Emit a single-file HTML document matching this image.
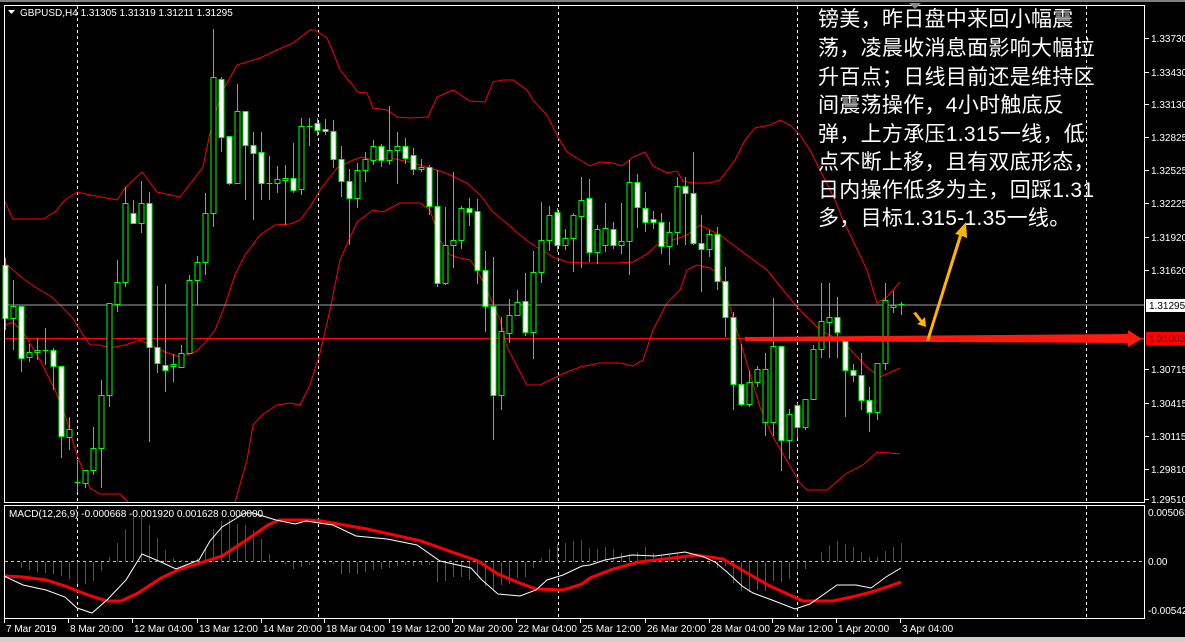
<!DOCTYPE html>
<html><head><meta charset="utf-8">
<style>
html,body{margin:0;padding:0;background:#000;width:1185px;height:642px;overflow:hidden}
svg{display:block}
text{font-family:"Liberation Sans","Noto Sans CJK SC",sans-serif}
</style></head><body>
<svg id="s" width="1185" height="642" viewBox="0 0 1185 642" xmlns="http://www.w3.org/2000/svg">
<rect width="1185" height="642" fill="#000"/>
<rect x="0" y="0" width="1185" height="2" fill="#808080"/>
<rect x="0" y="637" width="1185" height="5" fill="#d4d0c8"/>
<g id="grid" shape-rendering="crispEdges"></g>
<g id="bands" fill="none" stroke="#ff0000" stroke-width="1"></g>
<line x1="4" y1="305" x2="1145" y2="305" stroke="#a0a0a8" stroke-width="1" shape-rendering="crispEdges"/>
<line x1="4" y1="338.5" x2="1145" y2="338.5" stroke="#ff0000" stroke-width="1" shape-rendering="crispEdges"/>
<g id="candles" shape-rendering="crispEdges"></g>
<g id="hist" shape-rendering="crispEdges"></g>
<g id="macd"></g>
<g shape-rendering="crispEdges">
<rect x="4.5" y="5.5" width="1140" height="497" fill="none" stroke="#fff" stroke-width="1"/>
<rect x="4.5" y="505.5" width="1140" height="113" fill="none" stroke="#fff" stroke-width="1"/>
</g>
<polygon points="909,3 921,3 915,9" fill="#8a8a8a"/>
<polygon points="8,10 15,10 11.5,14" fill="#fff"/>
<text x="20" y="16" font-size="10" fill="#fff">GBPUSD,H4  1.31305 1.31319 1.31211 1.31295</text>
<text x="9" y="517" font-size="10" fill="#fff">MACD(12,26,9) -0.000668 -0.001920 0.001628 0.000000</text>
<g id="axis" font-size="10" fill="#fff"></g>
<rect x="1146" y="299" width="39" height="13" fill="#fff"/>
<text x="1149" y="309" font-size="10" fill="#000">1.31295</text>
<rect x="1146" y="332" width="39" height="13" fill="#ff0000"/>
<text x="1149" y="342" font-size="10" fill="#600">1.31003</text>
<polygon points="745,337 1128,334 1128,330 1142,339 1128,347 1128,343 745,341" fill="#ff1a10"/>
<polygon points="926,341 929,341 962,236 967,238 966,222 955,234 959,235" fill="#ffb400"/>
<polygon points="913,313 916,312 922,320 925,317 926,327 917,324 920,322" fill="#ffb400"/>
<g font-size="21" fill="#fff" letter-spacing="0.3">
<text x="818" y="26">镑美，昨日盘中来回小幅震</text>
<text x="818" y="55">荡，凌晨收消息面影响大幅拉</text>
<text x="818" y="84">升百点；日线目前还是维持区</text>
<text x="818" y="112">间震荡操作，4小时触底反</text>
<text x="818" y="141">弹，上方承压1.315一线，低</text>
<text x="818" y="169">点不断上移，且有双底形态，</text>
<text x="818" y="197">日内操作低多为主，回踩1.31</text>
<text x="818" y="225">多，目标1.315-1.35一线。</text>
</g>
</svg>
<script>
var NS="http://www.w3.org/2000/svg";
function el(p,t,a){var e=document.createElementNS(NS,t);for(var k in a)e.setAttribute(k,a[k]);p.appendChild(e);return e;}
var grid=document.getElementById('grid');
[77,318,558,797,1086].forEach(function(x){
 el(grid,'line',{x1:x+.5,y1:6,x2:x+.5,y2:502,stroke:'#fff','stroke-dasharray':'3,3'});
 el(grid,'line',{x1:x+.5,y1:506,x2:x+.5,y2:618,stroke:'#fff','stroke-dasharray':'3,3'});
});
el(grid,'line',{x1:5,y1:561.5,x2:1145,y2:561.5,stroke:'#c0c0c0','stroke-dasharray':'3,3'});
var bands=document.getElementById('bands');
function poly(p,pts,attrs){var s=pts.map(function(q){return q[0]+','+q[1]}).join(' ');var a={points:s};for(var k in attrs)a[k]=attrs[k];return el(p,'polyline',a);}
var up=[[5,202],[13,219],[43,219],[55,212],[65,200],[77,192],[90,195],[117,200],[125,188],[142,172],[157,192],[180,197],[203,167],[210,133],[217,108],[223,90],[237,65],[260,58],[277,50],[293,43],[310,30],[315,30],[327,38],[333,52],[340,70],[350,82],[358,92],[367,93],[373,108],[387,110],[397,117],[410,118],[428,117],[437,97],[453,90],[470,101],[485,102],[493,82],[503,80],[513,80],[527,90],[533,100],[547,115],[558,137],[567,152],[580,160],[590,166],[600,162],[613,163],[622,166],[633,157],[645,152],[653,166],[667,173],[677,171],[683,181],[693,183],[710,183],[720,180],[735,160],[745,140],[755,128],[770,125],[780,120],[790,125],[800,135],[810,150],[820,170],[835,200],[843,220],[855,245],[867,270],[877,303],[887,297],[900,282]];
var mid=[[5,263],[13,270],[25,280],[40,290],[52,297],[60,305],[72,317],[80,330],[90,345],[100,345],[110,348],[125,345],[140,340],[150,345],[165,352],[180,357],[195,352],[205,343],[215,330],[225,305],[235,275],[245,255],[260,235],[275,225],[290,224],[300,220],[310,207],[320,190],[337,168],[353,160],[362,157],[373,160],[390,158],[410,162],[420,165],[440,171],[450,175],[467,183],[480,195],[493,212],[503,220],[520,235],[533,245],[553,257],[567,262],[587,263],[617,263],[633,262],[647,254],[657,245],[670,241],[687,235],[700,225],[720,235],[740,250],[767,270],[797,307],[820,330],[843,342],[867,367],[880,377],[900,368]];
var lo1=[[5,325],[13,322],[25,335],[40,360],[55,390],[65,415],[77,455],[90,488],[100,494],[120,494],[128,502]];
var lo2=[[235,502],[247,460],[253,425],[262,415],[277,405],[290,403],[300,405],[310,385],[320,353],[330,310],[340,260],[357,222],[373,210],[383,212],[400,203],[420,203],[430,210],[440,240],[450,255],[460,258],[470,260],[477,270],[487,290],[500,320],[507,347],[520,372],[527,385],[540,385],[560,375],[580,367],[600,363],[620,363],[633,366],[643,360],[653,330],[667,303],[680,290],[687,270],[697,265],[710,268],[720,275],[733,317],[760,407],[773,437],[800,483],[807,490],[827,490],[847,473],[863,465],[877,452],[900,454]];
[up,mid,lo1,lo2].forEach(function(p){poly(bands,p,{});});
var C=[['W',265,318,258,330],['H',306,318,280,350],['W',306,358,306,372],['H',352,357,344,362],['H',350,352,338,360],['D',350,350,328,365],['W',350,366,348,390],['W',366,436,366,458],['H',429,437,417,450],['D',482,482,460,492],['H',470,483,470,488],['H',448,470,427,475],['H',395,448,380,488],['H',303,395,303,407],['H',282,304,260,312],['H',203,282,187,287],['W',213,223,200,224],['H',203,223,181,233],['W',203,347,192,442],['W',347,363,286,373],['W',365,370,284,392],['H',364,365,354,382],['H',353,367,345,368],['H',280,353,275,353],['H',262,280,256,305],['H',213,262,193,275],['H',77,213,29,227],['W',79,137,77,152],['W',136,183,136,185],['H',111,183,84,184],['W',111,145,111,200],['W',145,153,132,220],['W',152,183,132,200],['D',183,183,156,200],['H',179,183,166,193],['H',178,180,165,225],['W',178,190,143,193],['H',126,189,118,195],['D',126,126,118,146],['W',123,130,118,136],['W',129,131,119,135],['W',131,159,120,168],
['W',159,181,146,197],['W',181,198,169,245],['H',170,198,163,208],['H',159,170,152,182],['H',146,160,140,165],['W',146,160,144,167],['H',150,160,106,165],['H',146,150,132,184],['W',146,158,138,164],['W',155,169,148,175],['H',167,169,159,172],['W',167,206,165,215],['W',206,283,170,287],['H',245,283,207,285],['H',240,245,172,268],['H',208,240,206,249],['W',208,212,198,226],['W',211,270,199,284],['W',270,306,251,332],['W',306,395,257,440],['H',331,395,317,410],['H',315,333,299,343],['H',302,315,290,316],['W',301,332,273,336],['H',272,332,251,359],['H',240,272,202,283],['H',215,240,206,251],['W',212,245,208,252],['H',238,245,229,250],['H',215,238,213,272],['H',200,216,177,268],['W',198,252,179,262],['H',229,252,225,264],['H',228,245,203,252],['W',229,245,222,249],['H',241,245,203,254],['H',182,241,160,275],['W',182,207,174,228],['W',208,222,192,232],['W',219,222,211,229],['W',222,246,213,254],['H',232,246,222,265],['H',186,232,177,245],['W',186,193,177,245],['W',193,243,152,245],['W',243,249,215,292],
['H',234,249,230,257],['W',234,281,227,290],['W',281,317,267,337],['W',317,384,312,410],['W',384,404,344,406],['H',382,404,371,407],['H',369,382,366,387],['H',369,422,353,436],['H',346,422,298,436],['W',346,440,346,471],['H',414,440,409,459],['W',405,427,403,438],['H',399,427,399,430],['H',349,399,345,399],['H',321,349,283,358],['H',317,322,283,358],['W',317,332,297,358],['W',340,370,337,417],['W',370,375,364,382],['W',375,400,353,410],['W',400,412,387,432],['H',363,412,363,420],['H',300,363,283,370],['H',305,307,291,313],['D',304,304,302,315]];
var cg=document.getElementById('candles');
C.forEach(function(c,i){
 var x=5+8*i+.5;
 el(cg,'line',{x1:x,y1:c[3],x2:x,y2:c[4],stroke:'#00ff00','stroke-width':1});
 if(c[0]=='D'){el(cg,'line',{x1:x-3,y1:c[1]+.5,x2:x+3,y2:c[1]+.5,stroke:'#00ff00','stroke-width':1});}
 else{var h=Math.max(c[2]-c[1],2);el(cg,'rect',{x:x-2.5,y:c[1]+.5,width:5,height:h,fill:c[0]=='W'?'#fff':'#000',stroke:'#00ff00','stroke-width':1});}
});
var H=[561,561,568,570,572,573,574,576,579,584,584,581,571,557,543,529,517,515,525,538,550,558,560,561,558,548,529,521,519,524,525,530,539,554,561,564,569,567,565,563,564,564,574,573,574,572,570,569,568,566,565,566,565,565,582,581,577,577,580,576,586,589,585,584,578,577,568,558,549,544,543,541,540,548,549,547,549,553,554,552,547,553,555,555,553,557,560,561,564,568,566,583,591,592,590,591,581,582,579,569,569,561,552,545,541,544,547,552,557,557,551,547,543];
var hg=document.getElementById('hist');
H.forEach(function(v,i){var x=5+8*i;if(v==561)return;var top=Math.min(v,562),bot=Math.max(v,562);el(hg,'rect',{x:x,y:top,width:1,height:bot-top,fill:v<561?'#ff0000':'#009000'});});
var mg=document.getElementById('macd');
var wl=[[4,576],[23,585],[46,590],[65,597],[77,608],[92,613],[107,600],[126,580],[142,554],[161,562],[176,569],[199,560],[210,541],[222,527],[245,513],[253,513],[276,520],[295,524],[306,521],[333,525],[356,536],[387,539],[417,545],[440,561],[471,568],[482,580],[498,594],[520,596],[536,590],[547,580],[563,575],[582,566],[590,565],[605,560],[632,555],[655,556],[685,552],[704,557],[715,562],[727,572],[742,586],[753,593],[772,600],[795,609],[810,604],[837,585],[856,585],[871,588],[886,577],[901,568]];
var sl=[[5,576],[23,577],[46,580],[65,586],[88,595],[107,601],[121,601],[138,593],[161,578],[180,569],[203,562],[222,556],[245,541],[268,525],[279,520],[306,520],[321,521],[344,525],[367,529],[421,541],[452,552],[478,561],[498,574],[517,582],[536,589],[563,590],[582,584],[590,578],[613,569],[639,562],[673,558],[696,555],[723,559],[742,570],[768,585],[803,601],[833,601],[856,596],[875,591],[901,582]];
poly(mg,sl,{fill:'none',stroke:'#ff0000','stroke-width':3});
poly(mg,wl,{fill:'none',stroke:'#fff','stroke-width':1});
var ax=document.getElementById('axis');
var P=[['1.33730',38],['1.33430',72],['1.33130',104],['1.32825',137],['1.32525',170],['1.32225',203],['1.31920',237],['1.31620',270],['1.30715',369],['1.30415',403],['1.30115',436],['1.29810',469],['1.29510',499]];
P.forEach(function(p){el(ax,'line',{x1:1145,y1:p[1]+.5,x2:1149,y2:p[1]+.5,stroke:'#fff'});var t=el(ax,'text',{x:1151,y:p[1]+4});t.textContent=p[0];});
[['0.005063',516],['0.00',565],['-0.00542',614]].forEach(function(p){var t=el(ax,'text',{x:1148,y:p[1]});t.textContent=p[0];});
var D=[['7 Mar 2019',4],['8 Mar 20:00',68],['12 Mar 04:00',132],['13 Mar 12:00',197],['14 Mar 20:00',261],['18 Mar 04:00',324],['19 Mar 12:00',389],['20 Mar 20:00',452],['22 Mar 04:00',516],['25 Mar 12:00',580],['26 Mar 20:00',645],['28 Mar 04:00',709],['29 Mar 12:00',772],['1 Apr 20:00',836],['3 Apr 04:00',900]];
D.forEach(function(d){el(ax,'line',{x1:d[1]+.5,y1:619,x2:d[1]+.5,y2:623,stroke:'#fff'});var t=el(ax,'text',{x:d[1]+2,y:632});t.textContent=d[0];});
</script>
</body></html>
